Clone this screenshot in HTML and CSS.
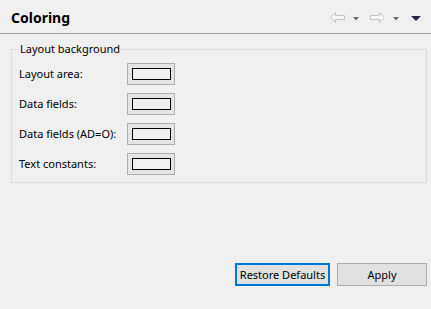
FILE: index.html
```html
<!DOCTYPE html>
<html>
<head>
<meta charset="utf-8">
<link rel="stylesheet" href="styles.css">
</head>
<body>
<div class="page">
  <div class="header">
    <div class="title">Coloring</div>
    <div class="tools">
      <svg class="arrow" width="15" height="11" viewBox="0 0 15 11"><path d="M0.5 5.5 L5.5 0.5 V3.5 H14.5 V7.5 H5.5 V10.5 Z" fill="#f8f8f8" stroke="#c4c4c4"/></svg>
      <svg class="tri" width="6" height="4" viewBox="0 0 6 4"><path d="M0 0 H6 L3 3.5 Z" fill="#6e6a70"/></svg>
      <svg class="arrow fwd" width="15" height="11" viewBox="0 0 15 11"><path d="M14.5 5.5 L9.5 0.5 V3.5 H0.5 V7.5 H9.5 V10.5 Z" fill="#f8f8f8" stroke="#c4c4c4"/></svg>
      <svg class="tri" width="6" height="4" viewBox="0 0 6 4"><path d="M0 0 H6 L3 3.5 Z" fill="#6e6a70"/></svg>
      <svg class="tri big" width="10" height="5" viewBox="0 0 10 5"><path d="M0 0 H10 L5 5 Z" fill="#2e2240"/></svg>
    </div>
  </div>
  <fieldset class="group">
    <legend>Layout background</legend>
    <div class="rows">
      <div class="label">Layout area:</div><div class="swatch"><span></span></div>
      <div class="label">Data fields:</div><div class="swatch"><span></span></div>
      <div class="label">Data fields (AD=O):</div><div class="swatch"><span></span></div>
      <div class="label">Text constants:</div><div class="swatch"><span></span></div>
    </div>
  </fieldset>
  <div class="footer">
    <button class="btn primary">Restore Defaults</button>
    <button class="btn apply">Apply</button>
  </div>
</div>
</body>
</html>
```
FILE: styles.css
```css
html, body {
  margin: 0;
  padding: 0;
  background: #f0f0f0;
}
.page {
  height: 309px;
  display: flex;
  flex-direction: column;
  font-family: "Noto Sans", sans-serif;
  font-size: 11px;
  color: #000;
}
.header {
  height: 34px;
  border-bottom: 1px solid #a0a0a0;
  display: flex;
  align-items: center;
  padding: 2px 10px 0 11px;
  box-sizing: border-box;
}
.title {
  font-weight: bold;
  font-size: 14px;
  flex: 1;
}
.tools {
  display: flex;
  align-items: center;
}
.arrow { margin-right: 8px; }
.tri { margin-right: 11px; margin-top: 2px; }
.tri.big { margin-right: 0; margin-left: 1px; margin-top: 1px; }
.group {
  margin: 7px 4px 0 11px;
  padding: 0 7px 7px 7px;
  border: 1px solid #dcdcdc;
}
.group legend {
  padding: 0 1px;
  line-height: 16px;
}
.rows {
  margin-top: 6px;
  display: grid;
  grid-template-columns: 108px 48px;
  row-gap: 8px;
  align-items: center;
}
.label {
  line-height: 22px;
}
.swatch {
  width: 48px;
  height: 22px;
  box-sizing: border-box;
  border: 1px solid #adadad;
  background: #e5e5e5;
  display: flex;
  align-items: center;
  justify-content: center;
}
.swatch span {
  display: block;
  width: 39px;
  height: 12px;
  box-sizing: border-box;
  border: 1px solid #000;
  background: #f0f0f0;
}
.footer {
  margin-top: auto;
  display: flex;
  justify-content: flex-end;
  gap: 7px;
  padding: 0 4px 23px 0;
}
.btn {
  font-family: "Noto Sans", sans-serif;
  font-size: 11px;
  color: #000;
  height: 23px;
  box-sizing: border-box;
  background: #e1e1e1;
  border: 1px solid #adadad;
  padding: 0;
  margin: 0;
}
.btn.primary {
  width: 95px;
  border: 2px solid #0078d7;
}
.btn.apply {
  width: 90px;
}
```
